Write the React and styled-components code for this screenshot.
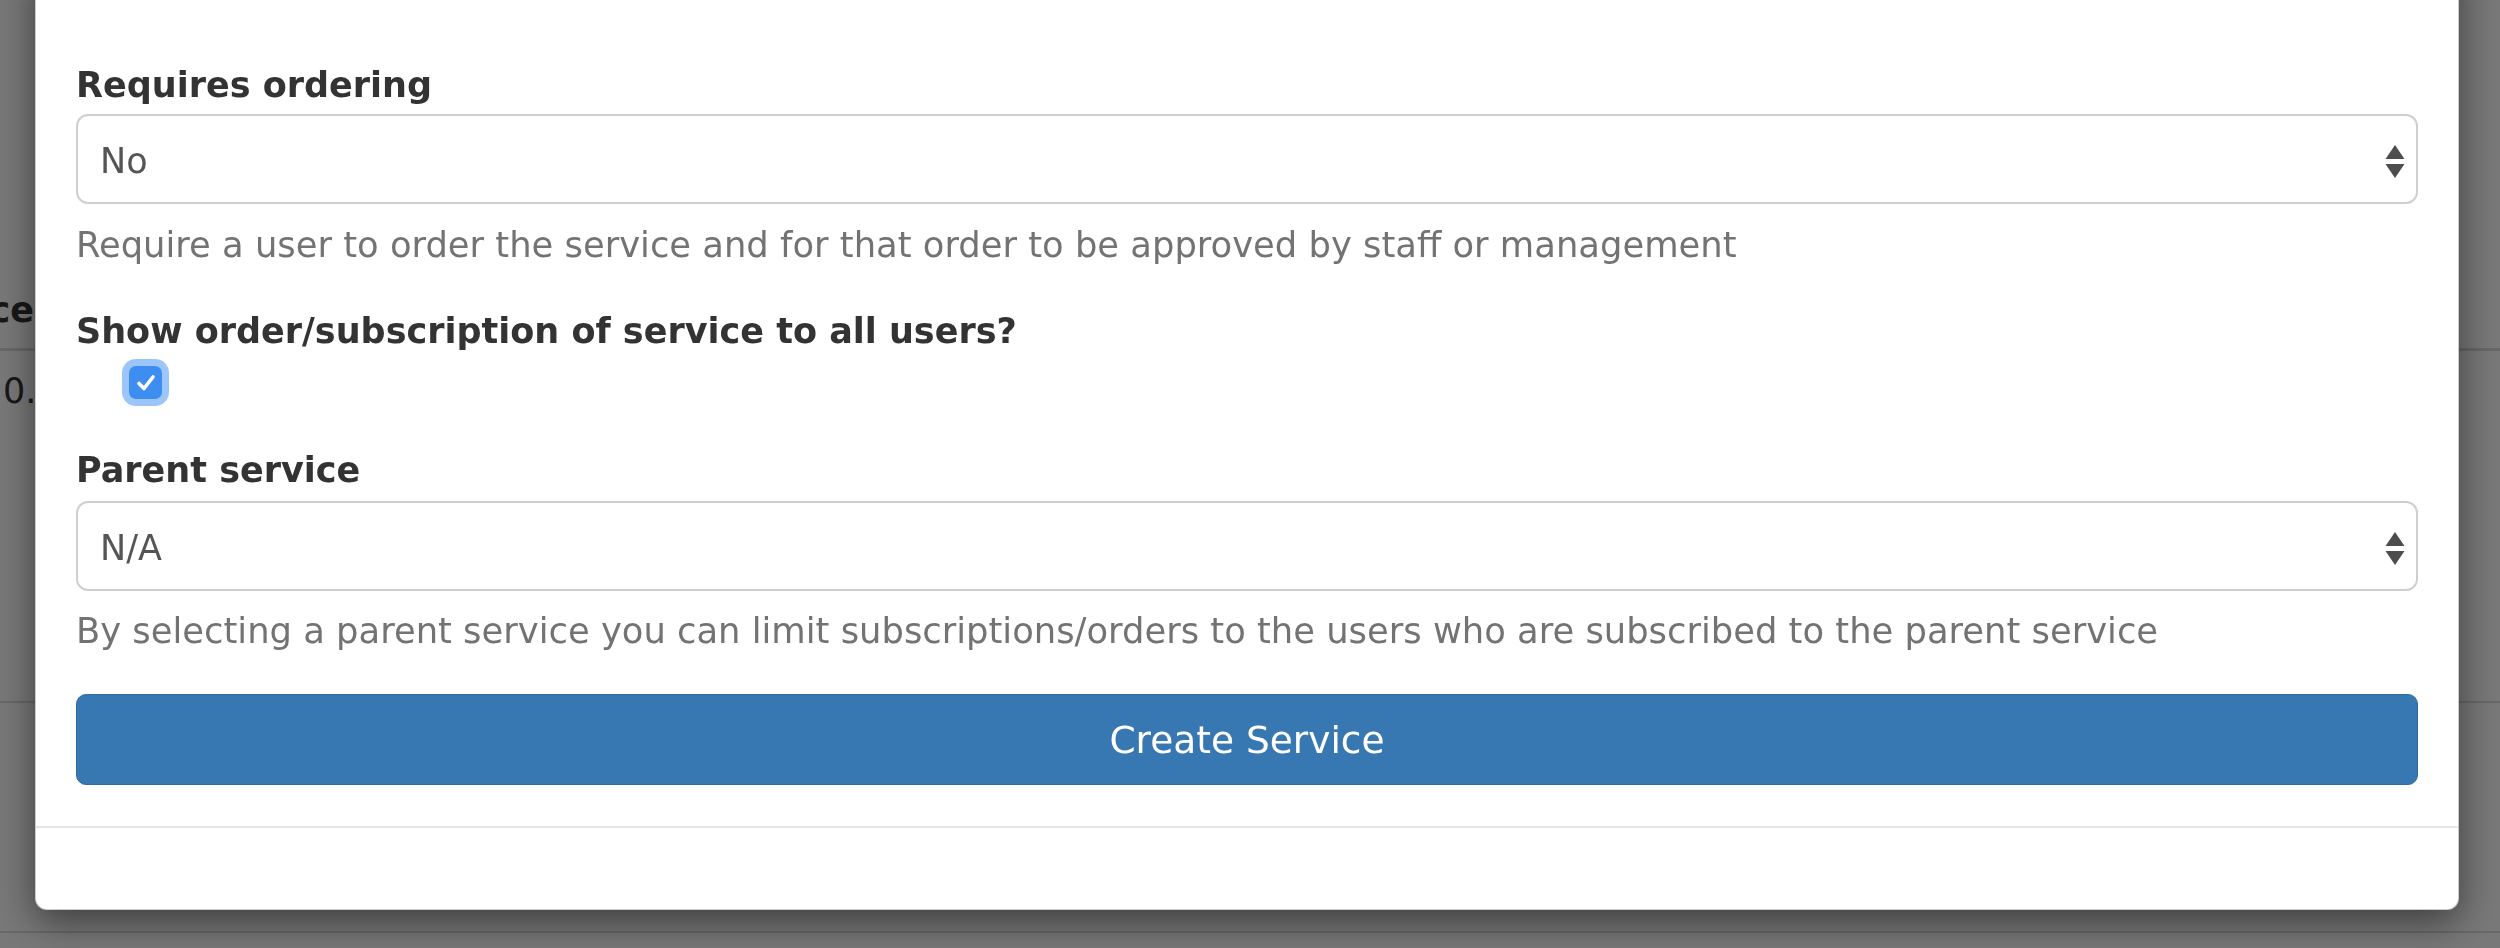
import styled, { createGlobalStyle } from "styled-components";

const GlobalStyle = createGlobalStyle`
  html, body {
    margin: 0;
    padding: 0;
    background: #fff;
    font-family: "DejaVu Sans", Verdana, sans-serif;
    overflow: hidden;
  }
  * {
    box-sizing: border-box;
  }
`;

const Page = styled.div`
  width: 100%;
  height: 948px;
  background: #fff;
  color: #333;
  font-size: 35px;
`;

const TableRow = styled.div`
  display: flex;
  align-items: ${(props) => (props.head ? "flex-end" : "flex-start")};
  height: ${(props) => props.h}px;
  padding: ${(props) => (props.head ? "0 0 13px 0" : "15px 0 0 3px")};
  border-bottom: ${(props) => (props.head ? "3px" : "2px")} solid #dcdcdc;
`;

const HeadCell = styled.div`
  width: 34px;
  display: flex;
  justify-content: flex-end;
  font-weight: bold;
  white-space: nowrap;
  line-height: 50px;
`;

const Cell = styled.div`
  white-space: nowrap;
  line-height: 50px;
`;

const Backdrop = styled.div`
  position: fixed;
  inset: 0;
  background: rgba(0, 0, 0, 0.53);
  display: flex;
  align-items: flex-end;
  padding: 0 41px 38px 35px;
`;

const Modal = styled.div`
  flex: 1;
  background: #fff;
  border: 1px solid rgba(0, 0, 0, 0.2);
  border-radius: 12px;
  box-shadow: 0 12px 38px rgba(0, 0, 0, 0.5);
`;

const ModalBody = styled.div`
  padding: 100px 40px 41px 40px;
`;

const FormGroup = styled.div`
  margin-bottom: ${(props) => props.mb ?? 36}px;
`;

const Label = styled.div`
  font-weight: bold;
  font-size: 35px;
  line-height: 50px;
  color: #333;
  margin-bottom: ${(props) => props.mb ?? 5}px;
`;

const Select = styled.div`
  display: flex;
  align-items: center;
  justify-content: space-between;
  height: 90px;
  padding: 4px 11px 0 22px;
  border: 2px solid #cfcfcf;
  border-radius: 12px;
  background: #fff;
  color: #555;
  font-size: 35px;
  line-height: 50px;
`;

const Help = styled.div`
  margin-top: ${(props) => props.mt ?? 15}px;
  color: #737373;
  font-size: 35.35px;
  line-height: 50px;
  white-space: nowrap;
`;

const CheckRow = styled.div`
  height: 53px;
  display: flex;
  align-items: center;
  padding-left: 53px;
`;

const CheckBox = styled.span`
  width: 33px;
  height: 33px;
  border-radius: 7px;
  background: #3d8ef0;
  box-shadow: 0 0 0 7px rgba(90, 160, 245, 0.6);
  display: flex;
  align-items: center;
  justify-content: center;
`;

const Button = styled.button`
  display: flex;
  align-items: center;
  justify-content: center;
  width: 100%;
  height: 91px;
  margin-top: 38px;
  border: 1px solid #2e6da4;
  border-radius: 10px;
  background: #3777b2;
  color: #fff;
  font-family: "DejaVu Sans", Verdana, sans-serif;
  font-size: 37.5px;
  padding: 0;
`;

const Footer = styled.div`
  height: 83px;
  border-top: 2px solid #e5e5e5;
`;

const SelectArrows = () => (
  <svg width="20" height="33" viewBox="0 0 20 33">
    <polygon points="10,0 19.5,14 0.5,14" fill="#4d4d4d" />
    <polygon points="0.5,19 19.5,19 10,33" fill="#4d4d4d" />
  </svg>
);

const Check = () => (
  <svg width="20" height="18" viewBox="0 0 20 18">
    <path
      d="M3 9.5 L8 14.5 L17 3"
      fill="none"
      stroke="#fff"
      strokeWidth="3.6"
      strokeLinecap="round"
      strokeLinejoin="round"
    />
  </svg>
);

export default function App() {
  return (
    <>
      <GlobalStyle />
      <Page>
        <TableRow head h={351}>
          <HeadCell>Service</HeadCell>
        </TableRow>
        <TableRow h={352}>
          <Cell>0.00</Cell>
        </TableRow>
        <TableRow h={230} />
      </Page>
      <Backdrop>
        <Modal>
          <ModalBody>
            <FormGroup>
              <Label mb={4}>Requires ordering</Label>
              <Select>
                <span>No</span>
                <SelectArrows />
              </Select>
              <Help mt={16}>
                Require a user to order the service and for that order to be approved by staff or management
              </Help>
            </FormGroup>
            <FormGroup>
              <Label mb={0}>Show order/subscription of service to all users?</Label>
              <CheckRow>
                <CheckBox>
                  <Check />
                </CheckBox>
              </CheckRow>
            </FormGroup>
            <FormGroup mb={0}>
              <Label mb={6}>Parent service</Label>
              <Select>
                <span>N/A</span>
                <SelectArrows />
              </Select>
              <Help>
                By selecting a parent service you can limit subscriptions/orders to the users who are subscribed to the parent service
              </Help>
            </FormGroup>
            <Button>Create Service</Button>
          </ModalBody>
          <Footer />
        </Modal>
      </Backdrop>
    </>
  );
}
